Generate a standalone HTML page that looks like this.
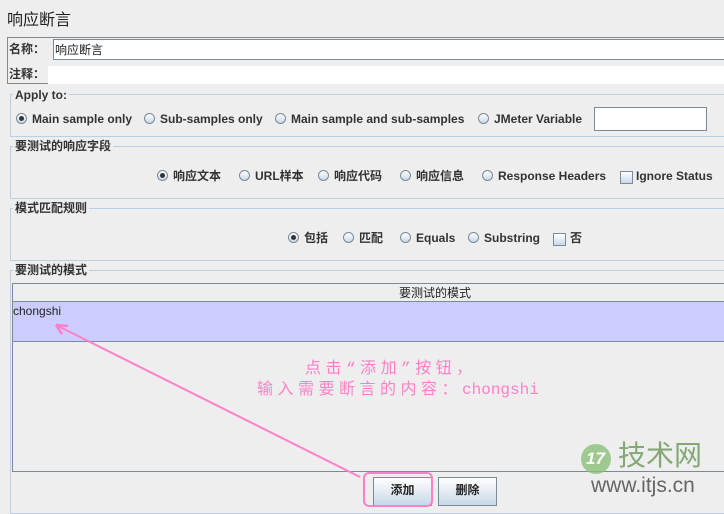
<!DOCTYPE html>
<html><head><meta charset="utf-8"><style>
body{margin:0;width:724px;height:514px;background:#eeeeee;position:relative;overflow:hidden;font-family:"Liberation Sans","Noto Sans CJK SC",sans-serif;color:#333;}
.a{position:absolute;white-space:nowrap}
.b{font-weight:bold;font-size:12px;color:#333;line-height:14px}
.grp{position:absolute;border:1px solid #b8cfe5;border-right:none}
.gt{position:absolute;background:#eee;padding:0 2px;font-weight:bold;font-size:12px;color:#333;line-height:14px}
.r{position:absolute;width:11px;height:11px;border-radius:50%;border:1px solid #7a8a99;background:linear-gradient(#fff,#c8d8e8);box-sizing:border-box}
.r.on::after{content:"";position:absolute;left:2px;top:2px;width:5px;height:5px;border-radius:50%;background:#333}
.c{position:absolute;width:13px;height:13px;border:1px solid #7a8a99;background:linear-gradient(#fff,#c8d8e8);box-sizing:border-box}
.btn{position:absolute;border:1px solid #7a8a99;background:linear-gradient(#fff,#c8d8e8);box-sizing:border-box;font-weight:bold;font-size:12px;text-align:center;line-height:25px;color:#222}
.ls{letter-spacing:4.5px}
</style></head><body>
<div class="a" style="left:7px;top:12px;font-size:16px;line-height:18px;color:#222">响应断言</div>
<div style="position:absolute;left:7px;top:37px;width:730px;height:47px;border:1px solid #888;box-sizing:border-box"></div>
<div class="a b" style="left:9px;top:42px">名称：</div>
<div style="position:absolute;left:53px;top:39px;width:680px;height:21px;background:#fff;border-top:1px solid #7a8a99;border-left:1px solid #7a8a99;border-bottom:1px solid #7a8a99;box-sizing:border-box"></div>
<div class="a" style="left:55px;top:43px;font-size:12px;line-height:14px;color:#222">响应断言</div>
<div class="a b" style="left:9px;top:67px">注释：</div>
<div style="position:absolute;left:48px;top:66px;width:680px;height:18px;background:#fff"></div>

<div class="grp" style="left:10px;top:94px;width:720px;height:41px"></div>
<div class="gt" style="left:13px;top:88px">Apply to:</div>
<div class="r on" style="left:16px;top:113px"></div><div class="a b" style="left:32px;top:112px">Main sample only</div>
<div class="r" style="left:144px;top:113px"></div><div class="a b" style="left:160px;top:112px">Sub-samples only</div>
<div class="r" style="left:275px;top:113px"></div><div class="a b" style="left:291px;top:112px">Main sample and sub-samples</div>
<div class="r" style="left:478px;top:113px"></div><div class="a b" style="left:494px;top:112px">JMeter Variable</div>
<div style="position:absolute;left:594px;top:107px;width:113px;height:24px;background:#fff;border:1px solid #7a8a99;box-sizing:border-box"></div>

<div class="grp" style="left:10px;top:146px;width:720px;height:51px"></div>
<div class="gt" style="left:13px;top:139px">要测试的响应字段</div>
<div class="r on" style="left:157px;top:170px"></div><div class="a b" style="left:173px;top:169px">响应文本</div>
<div class="r" style="left:239px;top:170px"></div><div class="a b" style="left:255px;top:169px">URL样本</div>
<div class="r" style="left:318px;top:170px"></div><div class="a b" style="left:334px;top:169px">响应代码</div>
<div class="r" style="left:400px;top:170px"></div><div class="a b" style="left:416px;top:169px">响应信息</div>
<div class="r" style="left:482px;top:170px"></div><div class="a b" style="left:498px;top:169px">Response Headers</div>
<div class="c" style="left:620px;top:171px"></div><div class="a b" style="left:636px;top:169px">Ignore Status</div>

<div class="grp" style="left:10px;top:208px;width:720px;height:51px"></div>
<div class="gt" style="left:13px;top:201px">模式匹配规则</div>
<div class="r on" style="left:288px;top:232px"></div><div class="a b" style="left:304px;top:231px">包括</div>
<div class="r" style="left:343px;top:232px"></div><div class="a b" style="left:359px;top:231px">匹配</div>
<div class="r" style="left:400px;top:232px"></div><div class="a b" style="left:416px;top:231px">Equals</div>
<div class="r" style="left:468px;top:232px"></div><div class="a b" style="left:484px;top:231px">Substring</div>
<div class="c" style="left:553px;top:233px"></div><div class="a b" style="left:570px;top:231px">否</div>

<div class="grp" style="left:10px;top:270px;width:720px;height:242px"></div>
<div class="gt" style="left:13px;top:263px">要测试的模式</div>
<div style="position:absolute;left:12px;top:283px;width:720px;height:189px;border-top:1px solid #7a8a99;border-left:1px solid #7a8a99;border-bottom:1px solid #7a8a99;box-sizing:border-box;background:#eee"></div>
<div class="a" style="left:399px;top:286px;font-size:12px;line-height:14px;color:#222">要测试的模式</div>
<div style="position:absolute;left:13px;top:301px;width:711px;height:41px;background:#ccccff;border-top:1px solid #7a8a99;border-bottom:1px solid #7a8a99;box-sizing:border-box"></div>
<div class="a" style="left:13px;top:304px;font-size:12px;line-height:14px;color:#222">chongshi</div>
<div class="a" style="left:257px;top:359px;font-size:16px;color:#ff80c8;line-height:21px;font-family:'Liberation Mono','Noto Sans CJK SC',monospace">
<div style="margin-left:48px" class="ls">点击“添加”按钮，</div><div><span class="ls">输入需要断言的内容：</span>chongshi</div></div>

<div class="btn" style="left:373px;top:477px;width:59px;height:29px">添加</div>
<div class="btn" style="left:438px;top:477px;width:59px;height:29px">删除</div>
<div style="position:absolute;left:363px;top:472px;width:70px;height:35px;border:2px solid #ff80c8;border-radius:6px;box-sizing:border-box"></div>
<svg style="position:absolute;left:0;top:0" width="724" height="514"><line x1="360" y1="477" x2="58" y2="326" stroke="#ff80c8" stroke-width="2"/><path d="M56 325 L68 326 M56 325 L62 334" stroke="#ff80c8" stroke-width="2.5" fill="none"/></svg>

<div style="position:absolute;left:581px;top:444px;width:30px;height:30px;border-radius:50%;background:#8cbf7a;opacity:.8"></div>
<div class="a" style="left:586px;top:449px;font-size:17px;line-height:20px;color:#fff;font-style:italic;font-weight:bold">17</div>
<div class="a" style="left:618px;top:440px;font-size:28px;line-height:32px;color:#7aa06a;opacity:.9">技术网</div>
<div class="a" style="left:591px;top:474px;font-size:21px;line-height:24px;color:#666">www.itjs.cn</div>
</body></html>
